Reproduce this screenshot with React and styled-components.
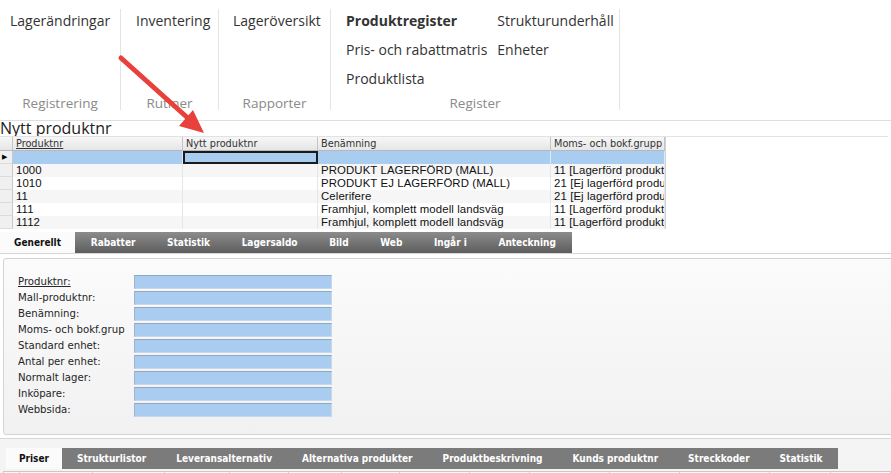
import styled, { createGlobalStyle } from "styled-components";

const GlobalStyle = createGlobalStyle`
    body {
        margin: 0;
        background: #ffffff;
        overflow: hidden;
    }
`;

const Page = styled.div`
    position: relative;
    width: 891px;
    height: 473px;
    overflow: hidden;
    background: #ffffff;
`;

/* ---------- ribbon ---------- */

const Ribbon = styled.div`
    display: flex;
    height: 120px;
    border-bottom: 1px solid #dedede;
    font-family: "Open Sans", "Noto Sans", sans-serif;
`;

const Group = styled.div`
    box-sizing: border-box;
    display: flex;
    flex-direction: column;
    width: ${(p) => p.width}px;
    margin: 9px 0 10px;
    border-right: 1px solid #e4e4e4;
`;

const GroupItems = styled.div`
    flex: 1;
    display: flex;
    gap: 10px;
    margin-top: -3px;
    padding-left: ${(p) => p.pad}px;
`;

const ItemColumn = styled.div`
    display: flex;
    flex-direction: column;
`;

const Item = styled.div`
    font-size: 14px;
    line-height: 29px;
    color: #333333;
    font-weight: ${(p) => (p.bold ? 700 : 400)};
    white-space: nowrap;
`;

const GroupLabel = styled.div`
    text-align: center;
    font-size: 13.5px;
    line-height: 20px;
    color: #8a8a8a;
    margin-bottom: -3px;
`;

/* ---------- bar above grid ---------- */

const InfoBar = styled.div`
    width: 888px;
    height: 15px;
    border-bottom: 1px solid #e2e2e2;
    overflow: hidden;
`;

const InfoText = styled.div`
    font-family: "Open Sans", "Noto Sans", sans-serif;
    font-size: 16px;
    line-height: 16px;
    margin-top: -1px;
    color: #222;
`;

/* ---------- product grid ---------- */

const Grid = styled.div`
    display: grid;
    grid-template-columns: 13px 170px 135px 233px 114px;
    width: 665px;
    border-right: 1px solid #c9d3de;
`;

const HeadCell = styled.div`
    height: 13px;
    line-height: 13px;
    padding-left: 3px;
    font-family: "DejaVu Sans Condensed", "DejaVu Sans", sans-serif;
    font-size: 10.8px;
    color: #333;
    text-decoration: ${(p) => (p.underline ? "underline" : "none")};
    background: linear-gradient(#f7f7f7, #e6e6e6);
    border-right: 1px solid #c4c4c4;
    border-bottom: 1px solid #b8b8b8;
    white-space: nowrap;
    overflow: hidden;
`;

const RowHead = styled.div`
    height: 13px;
    background: #f0f0f0;
    border-right: 1px solid #c8c8c8;
    border-bottom: 1px solid #dcdcdc;
    box-sizing: border-box;
    font-size: 7px;
    line-height: 12px;
    padding-left: 2px;
    color: #000;
`;

const Cell = styled.div`
    box-sizing: border-box;
    height: 13px;
    line-height: 13px;
    padding-left: 3px;
    font-family: "Liberation Sans", Arial, sans-serif;
    font-size: 11.4px;
    letter-spacing: 0.1px;
    color: #111;
    white-space: nowrap;
    overflow: hidden;
    background: ${(p) => (p.selected ? "#a9cdf1" : p.alt ? "#f6f6f6" : "#ffffff")};
    border-right: 1px solid #e6e6e6;
    border: ${(p) => (p.focus ? "2px solid #1a1a1a" : undefined)};
`;

/* ---------- tabs ---------- */

const TabStrip = styled.div`
    display: flex;
    margin-top: ${(p) => p.top}px;
    padding-left: ${(p) => p.left}px;
    height: 21px;
    border-bottom: ${(p) => (p.line ? "1px solid #d6d6d6" : "none")};
`;

const Tab = styled.div`
    padding: 0 ${(p) => p.pad}px;
    line-height: 21px;
    height: 21px;
    font-family: "DejaVu Sans Condensed", "DejaVu Sans", sans-serif;
    font-weight: 700;
    font-size: 10px;
    white-space: nowrap;
    color: ${(p) => (p.active ? "#111" : "#ffffff")};
    background: ${(p) =>
        p.active ? "#fbfbfb" : p.flat ? "#7b7b7b" : "linear-gradient(#8c8c8c, #5d5d5d)"};
`;

/* ---------- form panel ---------- */

const Panel = styled.div`
    margin: 4px 0 0 3px;
    height: 175px;
    width: 900px;
    border: 1px solid #d3d3d3;
    border-radius: 3px;
    background: linear-gradient(#fbfbfb, #f1f1f1);
`;

const Form = styled.div`
    display: grid;
    grid-template-columns: 116px 198px;
    row-gap: 2px;
    padding: 16px 0 0 14px;
`;

const Label = styled.div`
    height: 14px;
    line-height: 14px;
    font-family: "DejaVu Sans Condensed", "DejaVu Sans", sans-serif;
    font-size: 11.3px;
    color: #262626;
    white-space: nowrap;
    overflow: hidden;
    text-decoration: ${(p) => (p.underline ? "underline" : "none")};
`;

const Field = styled.div`
    box-sizing: border-box;
    height: 14px;
    background: #a9ccf0;
    border-top: 1px solid #8fa7bf;
    border-left: 1px solid #9db4cc;
    border-right: 1px solid #c6d8ea;
    border-bottom: 1px solid #c6d8ea;
`;

/* ---------- bottom area ---------- */

const Bottom = styled.div`
    margin-top: 3px;
    border-top: 1px solid #d6d6d6;
    background: #f4f4f4;
    padding-top: 9px;
    height: 40px;
`;

const SubGrid = styled.div`
    display: flex;
    margin: 2px 0 0 3px;
    height: 10px;
    border-top: 1px solid #c8c8c8;
    border-left: 1px solid #c8c8c8;
    background: #fafafa;
`;

const SubCol = styled.div`
    width: ${(p) => p.w}px;
    border-right: 1px solid #cfcfcf;
`;

/* ---------- arrow overlay ---------- */

const Arrow = styled.svg`
    position: absolute;
    left: 110px;
    top: 48px;
    pointer-events: none;
`;

const rows = [
    ["1000", "", "PRODUKT LAGERFÖRD (MALL)", "11 [Lagerförd produkt"],
    ["1010", "", "PRODUKT EJ LAGERFÖRD (MALL)", "21 [Ej lagerförd produ"],
    ["11", "", "Celerifere", "21 [Ej lagerförd produ"],
    ["111", "", "Framhjul, komplett modell landsväg", "11 [Lagerförd produkt"],
    ["1112", "", "Framhjul, komplett modell landsväg", "11 [Lagerförd produkt"],
];

const formLabels = [
    "Produktnr:",
    "Mall-produktnr:",
    "Benämning:",
    "Moms- och bokf.grup",
    "Standard enhet:",
    "Antal per enhet:",
    "Normalt lager:",
    "Inköpare:",
    "Webbsida:",
];

const topTabs = ["Rabatter", "Statistik", "Lagersaldo", "Bild", "Web", "Ingår i", "Anteckning"];
const bottomTabs = [
    "Strukturlistor",
    "Leveransalternativ",
    "Alternativa produkter",
    "Produktbeskrivning",
    "Kunds produktnr",
    "Streckkoder",
    "Statistik",
];
const subCols = [15, 73, 72, 65, 58, 53, 57, 70, 60, 80, 70, 90, 60, 60];

const App = () => {
    return (
        <Page>
            <GlobalStyle />
            <Ribbon>
                <Group width={121}>
                    <GroupItems pad={10}>
                        <Item>Lagerändringar</Item>
                    </GroupItems>
                    <GroupLabel>Registrering</GroupLabel>
                </Group>
                <Group width={98}>
                    <GroupItems pad={15}>
                        <Item>Inventering</Item>
                    </GroupItems>
                    <GroupLabel>Rutiner</GroupLabel>
                </Group>
                <Group width={112}>
                    <GroupItems pad={14}>
                        <Item>Lageröversikt</Item>
                    </GroupItems>
                    <GroupLabel>Rapporter</GroupLabel>
                </Group>
                <Group width={289}>
                    <GroupItems pad={15}>
                        <ItemColumn>
                            <Item bold>Produktregister</Item>
                            <Item>Pris- och rabattmatris</Item>
                            <Item>Produktlista</Item>
                        </ItemColumn>
                        <ItemColumn>
                            <Item>Strukturunderhåll</Item>
                            <Item>Enheter</Item>
                        </ItemColumn>
                    </GroupItems>
                    <GroupLabel>Register</GroupLabel>
                </Group>
            </Ribbon>

            <InfoBar>
                <InfoText>Nytt produktnr</InfoText>
            </InfoBar>

            <Grid>
                <HeadCell />
                <HeadCell underline>Produktnr</HeadCell>
                <HeadCell>Nytt produktnr</HeadCell>
                <HeadCell>Benämning</HeadCell>
                <HeadCell>Moms- och bokf.grupp</HeadCell>

                <RowHead>▶</RowHead>
                <Cell selected />
                <Cell selected focus />
                <Cell selected />
                <Cell selected />

                {rows.map((r, i) => [
                    <RowHead key={"h" + i} />,
                    ...r.map((v, j) => (
                        <Cell key={i + "-" + j} alt={i % 2 === 0}>
                            {v}
                        </Cell>
                    )),
                ])}
            </Grid>

            <TabStrip top={3} left={0} line>
                <Tab active pad={14}>
                    Generellt
                </Tab>
                {topTabs.map((t) => (
                    <Tab key={t} pad={15.8}>
                        {t}
                    </Tab>
                ))}
            </TabStrip>

            <Panel>
                <Form>
                    {formLabels.map((l, i) => [
                        <Label key={"l" + i} underline={i === 0}>
                            {l}
                        </Label>,
                        <Field key={"f" + i} />,
                    ])}
                </Form>
            </Panel>

            <Bottom>
                <TabStrip top={0} left={6}>
                    <Tab active pad={13}>
                        Priser
                    </Tab>
                    {bottomTabs.map((t) => (
                        <Tab key={t} flat pad={15}>
                            {t}
                        </Tab>
                    ))}
                </TabStrip>
                <SubGrid>
                    {subCols.map((w, i) => (
                        <SubCol key={i} w={w} />
                    ))}
                </SubGrid>
            </Bottom>

            <Arrow width="110" height="95" viewBox="0 0 110 95">
                <line x1="11" y1="10" x2="80" y2="72" stroke="#e8403a" strokeWidth="5" strokeLinecap="round" />
                <polygon points="94,85 69,78 83,62" fill="#e8403a" />
            </Arrow>
        </Page>
    );
};

export default App;
